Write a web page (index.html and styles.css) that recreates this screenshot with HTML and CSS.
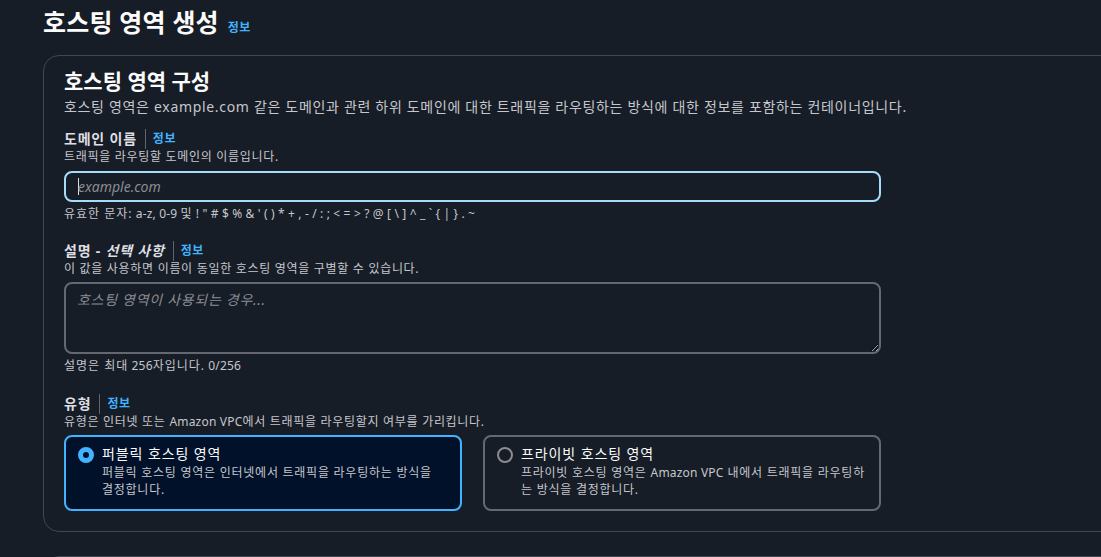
FILE: index.html
```html
<!DOCTYPE html>
<html lang="ko">
<head>
<meta charset="utf-8">
<title>호스팅 영역 생성</title>
<link rel="stylesheet" href="styles.css">
</head>
<body>
<div class="page">
  <h1 class="page-title">호스팅 영역 생성 <a class="info-link title-info">정보</a></h1>

  <section class="container">
    <h2 class="container-title">호스팅 영역 구성</h2>
    <p class="container-desc">호스팅 영역은 example.com 같은 도메인과 관련 하위 도메인에 대한 트래픽을 라우팅하는 방식에 대한 정보를 포함하는 컨테이너입니다.</p>

    <div class="field">
      <div class="label-row"><span class="label">도메인 이름</span><span class="sep"></span><a class="info-link">정보</a></div>
      <div class="field-desc">트래픽을 라우팅할 도메인의 이름입니다.</div>
      <div class="input focused"><span class="caret"></span><span class="placeholder">example.com</span></div>
      <div class="hint"><span class="ko">유효한 문자:</span> a-z, 0-9 <span class="ko">및</span> ! " # $ % &amp; ' ( ) * + , - / : ; &lt; = &gt; ? @ [ \ ] ^ _ ` { | } . ~</div>
    </div>

    <div class="field">
      <div class="label-row"><span class="label">설명 - <i>선택 사항</i></span><span class="sep"></span><a class="info-link">정보</a></div>
      <div class="field-desc">이 값을 사용하면 이름이 동일한 호스팅 영역을 구별할 수 있습니다.</div>
      <textarea class="textarea" placeholder="호스팅 영역이 사용되는 경우..."></textarea>
      <div class="hint"><span class="ko">설명은 최대</span> 256<span class="ko">자입니다.</span> 0/256</div>
    </div>

    <div class="field">
      <div class="label-row"><span class="label">유형</span><span class="sep"></span><a class="info-link">정보</a></div>
      <div class="field-desc">유형은 인터넷 또는 <span class="latin">Amazon VPC</span>에서 트래픽을 라우팅할지 여부를 가리킵니다.</div>
      <div class="cards">
        <div class="card selected">
          <span class="radio checked"></span>
          <div class="card-body">
            <div class="card-title">퍼블릭 호스팅 영역</div>
            <div class="card-desc">퍼블릭 호스팅 영역은 인터넷에서 트래픽을 라우팅하는 방식을 결정합니다.</div>
          </div>
        </div>
        <div class="card">
          <span class="radio"></span>
          <div class="card-body">
            <div class="card-title">프라이빗 호스팅 영역</div>
            <div class="card-desc">프라이빗 호스팅 영역은 <span class="latin">Amazon VPC</span> 내에서 트래픽을 라우팅하는 방식을 결정합니다.</div>
          </div>
        </div>
      </div>
    </div>
  </section>

  <section class="container next"></section>
</div>
</body>
</html>
```

FILE: styles.css
```css
html, body {
  margin: 0;
  padding: 0;
  overflow: hidden;
  background: #161d26;
}
body {
  font-family: "Noto Sans", "Noto Sans CJK KR", sans-serif;
  color: #dedee3;
  height: 557px;
}
.page {
  padding: 5px 0 0 43px;
}
.page-title {
  margin: 0;
  font-size: 25px;
  line-height: 34px;
  font-weight: 700;
  color: #fbfbfb;
  display: flex;
  align-items: baseline;
  letter-spacing: 0.2px;
}
.title-info {
  margin-left: 9px;
  letter-spacing: 0.5px;
}
.info-link {
  color: #42b4ff;
  font-size: 12px;
  font-weight: 700;
  line-height: 16px;
  text-decoration: none;
  letter-spacing: 0.5px;
}
.container {
  margin-top: 16px;
  width: 1200px;
  box-sizing: border-box;
  border: 1px solid #424650;
  border-radius: 16px;
  padding: 12px 20px 20px 20px;
}
.container-title {
  margin: 0;
  font-size: 21px;
  line-height: 26px;
  font-weight: 700;
  color: #fbfbfb;
}
.container-desc {
  margin: 3px 0 0 0;
  font-size: 14px;
  line-height: 20px;
  color: #c6c6cd;
  letter-spacing: 0.68px;
}
.field {
  width: 817px;
  margin-top: 19px;
}
.field:first-of-type {
  margin-top: 12px;
}
.label-row {
  display: flex;
  align-items: center;
  height: 20px;
}
.label {
  font-size: 14px;
  font-weight: 700;
  line-height: 20px;
  color: #dedee3;
  letter-spacing: 0.8px;
}
.label i {
  font-style: italic;
}
.sep {
  width: 1px;
  height: 20px;
  background: #5f6470;
  margin: 0 7px 0 8px;
}
.field-desc, .hint {
  font-size: 12px;
  line-height: 16px;
  color: #c6c6cd;
}
.field-desc {
  letter-spacing: 0.7px;
}
.latin {
  letter-spacing: 0.2px;
}
.hint {
  margin-top: 4px;
  letter-spacing: 0.15px;
}
.hint .ko {
  letter-spacing: 1px;
}
.input {
  margin-top: 6px;
  height: 31px;
  box-sizing: border-box;
  border: 2px solid #656871;
  border-radius: 8px;
  display: flex;
  align-items: center;
  padding-left: 12px;
}
.input.focused {
  border-color: #a6dcfb;
}
.caret {
  width: 1px;
  height: 17px;
  background: #dedee3;
}
.placeholder {
  font-size: 14px;
  font-style: italic;
  color: #8c8c94;
  margin-left: -1px;
}
.textarea {
  display: block;
  margin-top: 5px;
  width: 100%;
  height: 72px;
  box-sizing: border-box;
  border: 2px solid #656871;
  border-radius: 8px;
  background: transparent;
  padding: 6px 12px 4px 11px;
  font-family: "Noto Sans", "Noto Sans CJK KR", sans-serif;
  font-size: 14px;
  line-height: 20px;
  color: #dedee3;
  letter-spacing: 0.7px;
  resize: vertical;
  outline: none;
}
.textarea::placeholder {
  color: #8c8c94;
  font-style: italic;
}
.field:last-of-type {
  margin-top: 20px;
}
.cards {
  margin-top: 5px;
  display: grid;
  grid-template-columns: 1fr 1fr;
  gap: 21px;
}
.card {
  box-sizing: border-box;
  height: 76px;
  border: 2px solid #656871;
  border-radius: 8px;
  padding: 7px 14px 8px 12px;
  display: flex;
  gap: 8px;
}
.card.selected {
  border-color: #42b4ff;
  background: #001129;
}
.radio {
  flex: none;
  width: 16px;
  height: 16px;
  box-sizing: border-box;
  border-radius: 50%;
  border: 2px solid #8c8c94;
  margin-top: 3px;
}
.radio.checked {
  border: 5px solid #42b4ff;
  background: #001129;
}
.card-title {
  font-size: 14px;
  line-height: 20px;
  color: #fbfbfb;
  letter-spacing: 0.9px;
}
.card-desc {
  font-size: 12px;
  line-height: 17px;
  color: #c6c6cd;
  letter-spacing: 0.75px;
}
.container.next {
  margin-top: 24px;
  height: 40px;
  padding: 0;
}
```
